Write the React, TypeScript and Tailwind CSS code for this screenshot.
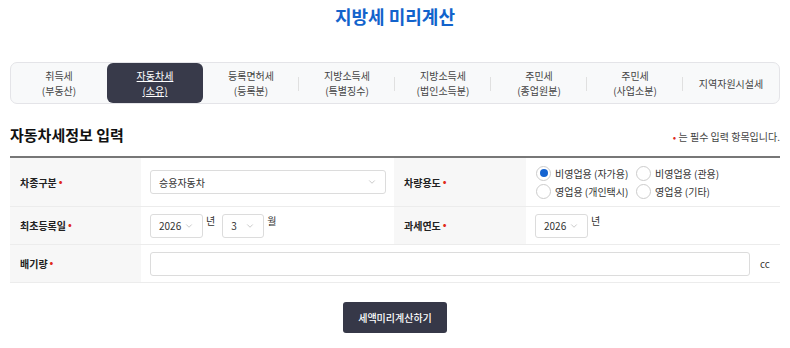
import { ChevronDown } from "lucide-react";

const tabs = [
  ["취득세", "(부동산)"],
  ["자동차세", "(소유)"],
  ["등록면허세", "(등록분)"],
  ["지방소득세", "(특별징수)"],
  ["지방소득세", "(법인소득분)"],
  ["주민세", "(종업원분)"],
  ["주민세", "(사업소분)"],
  ["지역자원시설세"],
];

const radios = ["비영업용 (자가용)", "비영업용 (관용)", "영업용 (개인택시)", "영업용 (기타)"];

function Label({ text }: { text: string }) {
  return (
    <div className="flex items-center bg-[#f7f7f7] pl-[10px] text-[10px] font-bold text-[#222]">
      {text}
      <span className="ml-[2px] -mt-[4px] text-[#e02b1b]">•</span>
    </div>
  );
}

function Select({ value, w }: { value: string; w: string }) {
  return (
    <div
      className={`flex h-[24px] items-center justify-between rounded-[3px] border border-[#dcdcdc] bg-white pl-[8px] pr-[8px] text-[10px] text-[#333] ${w}`}
    >
      <span>{value}</span>
      <ChevronDown className="h-[10px] w-[10px] text-[#aaa]" strokeWidth={1.5} />
    </div>
  );
}

export default function App() {
  return (
    <div
      className="h-[348px] w-[790px] bg-white text-[#222]"
      style={{ fontFamily: '"Noto Sans CJK KR", "Noto Sans", sans-serif' }}
    >
      <h1 className="pt-[3px] text-center text-[18px] font-bold leading-[26px] text-[#1263cc]">지방세 미리계산</h1>

      {/* tab bar */}
      <div className="mx-[10px] mt-[33px] flex h-[42px] w-[770px] items-stretch rounded-[7px] border border-[#e4e4e8] bg-[#f8f9fa]">
        {tabs.map((t, i) => {
          const active = i === 1;
          const nextActive = i + 1 === 1;
          return (
            <div key={i} className="relative flex flex-1 items-center justify-center">
              <div
                className={`flex h-full w-full flex-col items-center justify-center text-[10px] leading-[15px] ${
                  active ? "-my-px rounded-[6px] bg-[#383a4a] text-white underline" : "text-[#444]"
                }`}
              >
                {t.map((line, j) => (
                  <span key={j}>{line}</span>
                ))}
              </div>
              {!active && !nextActive && i < tabs.length - 1 && (
                <span className="absolute right-0 top-[14px] h-[14px] w-px bg-[#e0e0e0]" />
              )}
            </div>
          );
        })}
      </div>

      {/* heading */}
      <div className="mx-[10px] mt-[20px] flex items-end justify-between">
        <h2 className="text-[15px] font-bold leading-[22px] text-[#111]">자동차세정보 입력</h2>
        <p className="pb-[2px] text-[10px] text-[#444]">
          <span className="text-[#e02b1b]">•</span> 는 필수 입력 항목입니다.
        </p>
      </div>

      {/* table */}
      <div className="mx-[10px] mt-[10px] w-[770px] border-t-2 border-[#777]">
        <div className="grid h-[49px] grid-cols-[131px_253px_132px_1fr] border-b border-[#ececec]">
          <Label text="차종구분" />
          <div className="flex items-center pl-[9px] pr-[8px]">
            <Select value="승용자동차" w="w-full" />
          </div>
          <Label text="차량용도" />
          <div className="grid grid-cols-[100px_1fr] content-center gap-y-[3px] pl-[10px] text-[10px] text-[#333]">
            {radios.map((r, i) => (
              <label key={r} className="flex items-center gap-[4px]">
                <span className="flex h-[15px] w-[15px] items-center justify-center rounded-full border border-[#ccc] bg-white">
                  {i === 0 && <span className="h-[8px] w-[8px] rounded-full bg-[#1463d0]" />}
                </span>
                {r}
              </label>
            ))}
          </div>
        </div>

        <div className="grid h-[38px] grid-cols-[131px_253px_132px_1fr] border-b border-[#ececec]">
          <Label text="최초등록일" />
          <div className="flex items-center pl-[9px] text-[10px] text-[#333]">
            <Select value="2026" w="w-[53px]" />
            <span className="ml-[3px] mr-[7px] self-start pt-[6px]">년</span>
            <Select value="3" w="w-[42px]" />
            <span className="ml-[3px] self-start pt-[6px]">월</span>
          </div>
          <Label text="과세연도" />
          <div className="flex items-center pl-[9px] text-[10px] text-[#333]">
            <Select value="2026" w="w-[53px]" />
            <span className="ml-[3px] self-start pt-[6px]">년</span>
          </div>
        </div>

        <div className="grid h-[38px] grid-cols-[131px_1fr_30px] border-b border-[#ececec]">
          <Label text="배기량" />
          <div className="flex items-center pl-[9px]">
            <div className="h-[24px] w-full rounded-[3px] border border-[#dcdcdc] bg-white" />
          </div>
          <div className="flex items-center pl-[10px] text-[10px] text-[#333]">cc</div>
        </div>
      </div>

      <div className="mt-[19px] flex justify-center">
        <button className="h-[31px] w-[104px] rounded-[3px] bg-[#363848] text-[10px] font-medium text-white">
          세액미리계산하기
        </button>
      </div>
    </div>
  );
}
